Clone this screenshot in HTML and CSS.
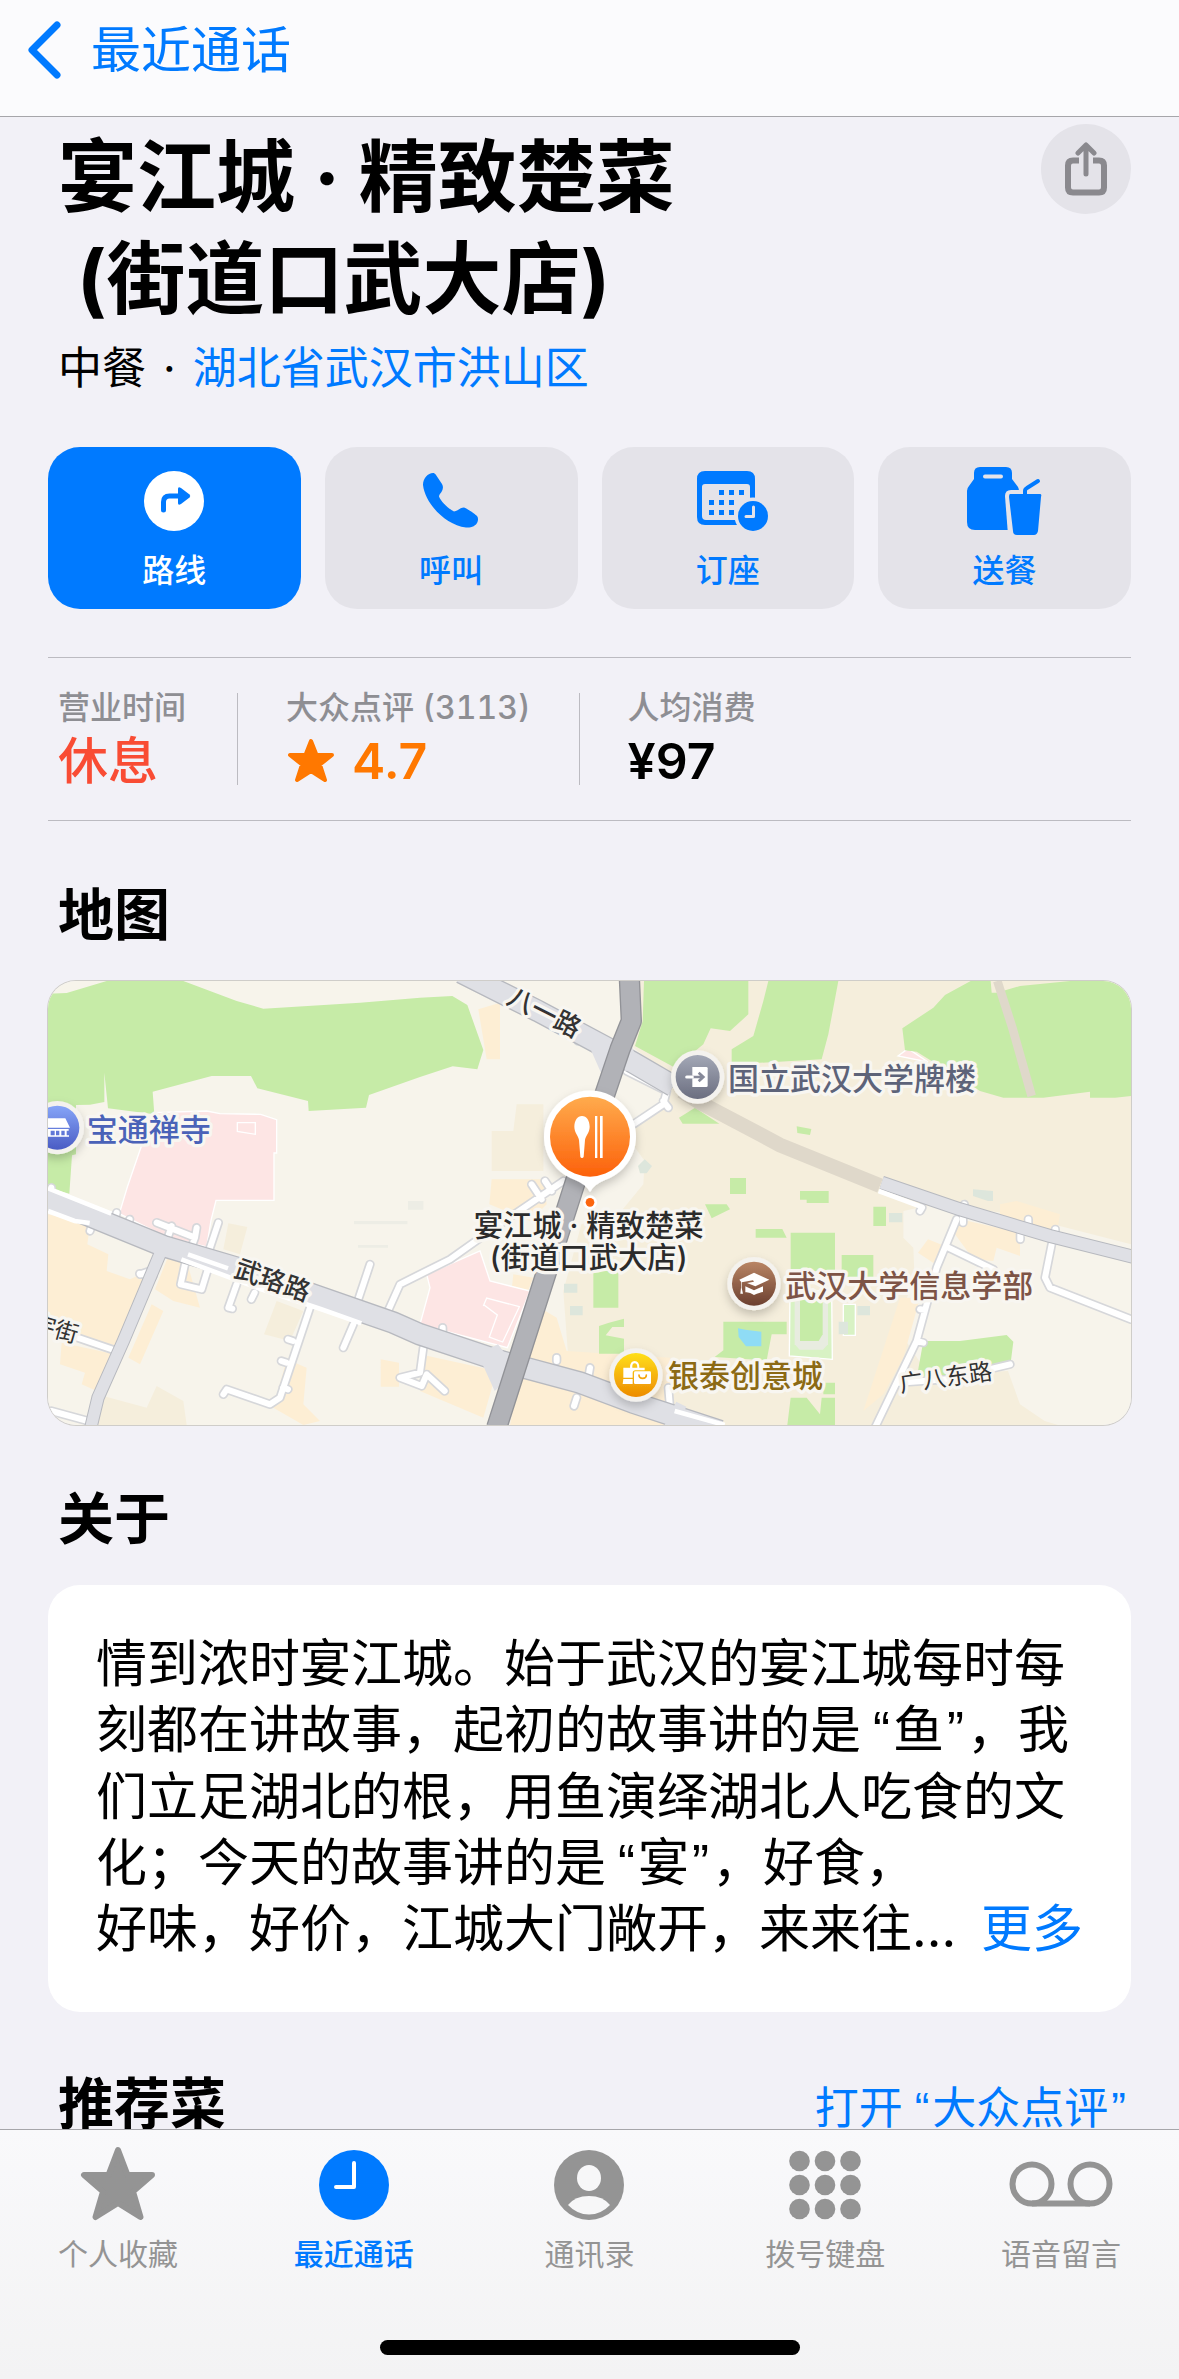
FILE: index.html
```
<!DOCTYPE html>
<html lang="zh-CN">
<head>
  <meta charset="UTF-8" />
  <meta name="viewport" content="width=device-width, initial-scale=1.0"/>
  <title>宴江城 · 精致楚菜</title>
  <link rel="stylesheet" href="styles.css">
</head>
<body>

  <header class="navbar">
    <a class="back" href="#recents">
      <svg width="34" height="58" viewBox="0 0 34 58"><path d="M30 4 5 29l25 25" fill="none" stroke="currentColor" stroke-width="7" stroke-linecap="round" stroke-linejoin="round"/></svg>
      最近通话
    </a>
  </header>

  <main class="content">
    <section class="place">
      <div>
        <h1>宴江城 · 精致楚菜<br>&nbsp;(街道口武大店)</h1>
        <p class="subtitle">中餐<span class="dot">·</span><a href="#area">湖北省武汉市洪山区</a></p>
      </div>
      <button class="share" type="button" aria-label="共享">
        <svg width="42" height="54" viewBox="0 0 42 54" fill="none" stroke="currentColor" stroke-linecap="round" stroke-linejoin="round">
          <path d="M14 18.500H8q-5 0-5 5v22q0 5 5 5h26q5 0 5-5v-22q0-5-5-5h-6" stroke-width="6" stroke-linecap="butt"/>
          <path d="M21 32V4M13 11l8-8 8 8" stroke-width="5"/>
        </svg>
      </button>
    </section>

    <div class="actions">
      <button class="action primary" type="button">
        <svg width="60" height="60" viewBox="0 0 60 60">
          <circle cx="30" cy="30" r="30" fill="#fff"/>
          <path d="M19.500 39V31q0-6 6-6H36" fill="none" stroke="#007aff" stroke-width="5" stroke-linecap="round"/>
          <path d="M34 18q0-3 3-1l8.500 6.500q1.500 1.500 0 3L37 33q-3 2-3-1z" fill="#007aff"/>
        </svg>
        路线
      </button>
      <button class="action" type="button">
        <svg width="56" height="56" viewBox="0 0 56 56">
          <path d="M10 0C11 0 12 .5 13 2L19 11C20.500 13.500 20 16 19 18 18 20 16 21.500 16 23.500 18 29 26 36 31 38.500 34 38.500 37 34.500 41 34.500 42.500 34.500 52 41 53.500 42.500 55 44 55.500 46 54.500 49 53 53 48 55 43 54.500 22 52 2 30 0 12 0 5 5 0 10 0z" fill="currentColor"/>
        </svg>
        呼叫
      </button>
      <button class="action" type="button">
        <svg width="82" height="60" viewBox="-10 0 82 60">
          <path fill="currentColor" fill-rule="evenodd" d="M8 0h42q8 0 8 8v38q0 8-8 8H8q-8 0-8-8V8q0-8 8-8zM8 13q-3 0-3 3v29q0 4 4 4h40q4 0 4-4V16q0-3-3-3z"/>
          <path fill="currentColor" d="M22 19h5v5h-5zM32 19h5v5h-5zM42 19h5v5h-5zM12 29h5v5h-5zM22 29h5v5h-5zM32 29h5v5h-5zM12 39h5v5h-5zM22 39h5v5h-5zM32 39h5v5h-5z"/>
          <circle cx="56" cy="45" r="18.500" fill="#e4e3e9"/>
          <circle cx="56" cy="45" r="15" fill="currentColor"/>
          <path d="M56.500 36v9.500H49" fill="none" stroke="#e4e3e9" stroke-width="3" stroke-linecap="round" stroke-linejoin="round"/>
        </svg>
        订座
      </button>
      <button class="action" type="button">
        <svg width="76" height="68" viewBox="0 0 76 68">
          <path fill="currentColor" d="M7 6q0-6 6-6h26q6 0 6 6v6l6 8q1 2 1 4v39H8q-8 0-8-8V24q0-3 2-5l5-7z"/>
          <path d="M18 9.500h16" stroke="#e4e3e9" stroke-width="4" stroke-linecap="round"/>
          <path fill="#e4e3e9" d="M44 23h30v45H41L38 29q0-6 6-6z"/>
          <path fill="currentColor" d="M43 27h30q2 0 1 3l-3 34q-1 4-4 4H50q-4 0-4-4l-4-34q0-3 1-3z"/>
          <path d="M58 28v-4q0-2 2-3l11-7" fill="none" stroke="currentColor" stroke-width="4" stroke-linecap="round"/>
        </svg>
        送餐
      </button>
    </div>

    <dl class="stats">
      <div class="stat">
        <dt>营业时间</dt>
        <dd class="closed">休息</dd>
      </div>
      <div class="stat">
        <dt>大众点评 (3113)</dt>
        <dd class="rating">
          <svg width="48" height="46" viewBox="0 0 48 46"><path d="M25 3l5.500 14H46L34 26.500 39 42 25 33 11 42l5-15.500L4 17h15.500z" fill="currentColor" stroke="currentColor" stroke-width="4" stroke-linejoin="round"/></svg>
          4.7
        </dd>
      </div>
      <div class="stat">
        <dt>人均消费</dt>
        <dd>¥97</dd>
      </div>
    </dl>

    <h2>地图</h2>
    <div class="map">
      <svg viewBox="0 0 3249 1332" role="img" aria-label="地图">
        <defs>
          <linearGradient id="food" x2="0" y2="1"><stop stop-color="#ffab4d"/><stop offset="1" stop-color="#fc610a"/></linearGradient>
          <linearGradient id="temple" x2="0" y2="1"><stop stop-color="#86a5f8"/><stop offset="1" stop-color="#4a5cc4"/></linearGradient>
          <linearGradient id="gate" x2="0" y2="1"><stop stop-color="#a3a8b6"/><stop offset="1" stop-color="#6b6e80"/></linearGradient>
          <linearGradient id="school" x2="0" y2="1"><stop stop-color="#b98565"/><stop offset="1" stop-color="#6c4030"/></linearGradient>
          <linearGradient id="shop" x2="0" y2="1"><stop stop-color="#ffdf1a"/><stop offset="1" stop-color="#ed8b00"/></linearGradient>
          <filter id="shadow" x="-30%" y="-30%" width="160%" height="180%"><feDropShadow dx="0" dy="14" stdDeviation="14" flood-opacity=".2"/></filter>
        </defs>

        <!-- land -->
        <rect width="3249" height="1332" fill="#f7f4eb"/>
        <path fill="#f5eedc" d="M1770 0H3249V790L2900 700 2660 670 2566 690 2566 770 2596 800 2600 900 2540 1030 2640 1180 2880 1170 2916 1270 2990 1320 3030 1332H1660L1560 1120 1546 930 1600 730 1720 690 1786 610 1790 540 1740 470 1756 440 1856 370 1876 290 1756 200zM541 727l57 11-22 82-50-15zM686 960l80 30-40 90-78-20zM166 1245l130 35 30-65 80 45 10 72H141zM1406 370h80v200h-155V450h65z"/>
        <path fill="#fdeed4" d="M0 700l126 30-8 60 63 30-5 50 70 25 55-25-93 230L0 1030zM361 825l55 15 40 140-80-20-55-35zM311 970l35 20-70 160-35-20zM41 1085l160 35-55 110-45-20 10-35-75-25zM716 1135l60 25-10 110 50 50-50 12-90-52zM998 1135l55 10v72h-55zM1331 595h155l10 75-50 50-122-50zM1291 85l65-20v170h-40zM1116 1120l230 50-40 140-190-80zM1476 980l50 30 30 100 310 20 10 202h-490l30-162 40-140zM1396 880l60 10-20 50-45-15zM2736 715l180 40 0 70-70-25-10 40-60-5-55-75zM2640 775l50 20-20 60-60-40zM2856 670l50-10 130 40-10 60-170-40zM2556 950h60l-50 180-60 110-60 50z"/>
        <!-- hospitals -->
        <path fill="#fde5e4" stroke="#fff" stroke-width="4" d="M316 395l160-5 40 8 122 2 48 16v100h-8v142H504l-15 60-13 80-120-30-142-70 24-80 36-105zM1136 880l160-70 30 90 120 30-68 170-262-70 30-110zM2550 225l30-22 60 40z"/>
        <path fill="none" stroke="#fff" stroke-width="4" d="M568 425h54v35l-54-9zM1306 975l10-24 98 26-50 106-40-15 24-66-40-30z"/>
        <!-- parks -->
        <path fill="#c6eba7" d="M0 38l56-2L176 0h230l160 60 80 23 290-18 180-15 97-5 45 27 48 135-18 58-74-9-98 32-153 54-9 38-172 10-2-30-152-38-19-37H491l-177 47 5 68-139-18-11-107v88l-43 8-42 1v148l-12 3-8 115-64-18z"/>
        <path fill="#c6eba7" d="M1788 0h313v100l-55 50-58-8-22 48-85 70-120-65 23-75zM2161 0h210l-30 160-20 75-270 15v-45l65-40 30-105zM2768 0h60l3 35h15l70-20 150-15h183v345l-48 5h-75v-18l-140 18h-120l-70-20-190-118-35-4-8-66 93-62 35-38z"/>
        <path fill="#c6eba7" d="M1893 410l48-30 73 48h-110zM2046 591h48v48h-48zM1971 670h65l10 15-55 27zM2123 744h80l13 26h-93zM2256 630h86v36h-66v-10h-20zM2476 677h38v58h-38zM2228 755h133v115h-133zM2381 822h95v70h-95zM2246 436l44 8-4 18-38-6zM1636 870h75v110h-75zM1653 1035l30-10 45-12v25h-35l-20 25 55 10v45h-75zM2026 1022h190v38h-45l-15 78-156-10 26-20zM2626 1080h110l140-18 20 20-10 80-280 30zM2326 1205h35v35h-35zM2228 1250h48l40 50 5-50h40v82h-143z"/>
        <path fill="#d8f2c4" stroke="#fff" stroke-width="4" d="M2226 930h125l2 205-129-10zM2386 970h36v93h-36z"/>
        <path fill="#e8ece0" d="M2240 950h100v140l-15 16h-70l-15-16z"/>
        <path fill="#c6eba7" d="M2256 940h68v120l-12 20h-56z"/>
        <path fill="#8fdcf5" d="M2070 1042l22 4 48 6v44h-46l-22-28z"/>
        <!-- buildings -->
        <path fill="#dde6dc" d="M1548 908h40v27h-40zM1566 975h38v28h-38zM1770 555l20-20 22 20-16 22h-20zM2775 625l60 5v30h-15l-45-15zM2523 696h40v28h-40zM2428 975h38v28h-38zM2372 1022h28v38h-28z"/>
        <path fill="#ededE5" d="M1080 660h46v26h-46zM918 720h160v10H918zM930 792h90v8h-90z"/>

        <!-- tunnels and paths -->
        <path fill="none" stroke="#dfd8ca" stroke-width="44" d="M1900 330l56 35 180 95 60 32 300 122"/>
        <path fill="none" stroke="#dfd8ca" stroke-width="26" d="M2848 0l45 140 58 205"/>

        <!-- lanes -->
        <g class="lane-edge">
          <path id="lanes" d="M0 1040l206 70M326 725l115 45 5-30M441 770l-15 40M361 765l10-30M511 725l-30 90M413 840l-15 70 63 15 20-65M566 910l-25 70 12 3M620 935l-10 20M786 980l-90 270-30 20-130-45-10 15M735 1080l-15-5M700 1140l15 5M705 1220l15 5M966 850l-40 120M916 1030l-30 70M1011 1010l45-100 150-75 120-85 220-150M1451 610l30 45M1491 600l20 30M1736 270l120 60-10 40-90 60M1846 360l15 20M1126 1100l-10 75-60 15 65 25 15-35 54 50M10 620l-10 30M206 695l-6 20M245 715l-6 20M132 730l-6 20M275 878l40 8M1345 40l12-20M1590 180l10-15M1626 1160l-5 30M1526 1140v-10M1586 1250l-8 25M1184 1040v20M1861 1220l5 60 120 50M2726 715l-60 145-60 220-125 260M2701 800l135 65M3011 790l-20 100 15 30 243 95M2551 1205l145-10 190-45M2606 1080l20 5M2616 985l15 2M2616 690l6-10M2749 670l-4 15v40M2941 715v20l-24 25v15M3022 745v10M10 1290l110 30M306 870l-30 10"/>
        </g>
        <use href="#lanes" class="lane"/>

        <!-- main roads -->
        <path class="road-edge" stroke-width="40" d="M346 795L226 1080 150 1250 126 1350"/>
        <path class="road-edge" stroke-width="68" d="M-10 650l356 145 220 65 240 85 230 80 80 35 240 80 240 65 160 60 260 85M1240-25l230 115 206 110 80 45 120 70"/>
        <path class="road-edge" stroke-width="42" d="M2501 605l235 80 270 80 260 65"/>
        <path class="road" stroke-width="34" d="M346 795L226 1080 150 1250 126 1350M1900 1270l-40 80"/>
        <path class="road" stroke-width="60" d="M-10 650l356 145 220 65 240 85 230 80 80 35 240 80 240 65 160 60 260 85M1240-25l230 115 206 110 80 45 120 70"/>
        <path class="road" stroke-width="36" d="M2501 605l235 80 270 80 260 65"/>
        <path fill="none" stroke="#fff" stroke-width="14" d="M0 622l190 76M0 690l80 30 45 6M400 835l240 90 180 60 120 42M420 820l120 42M2492 630l130 48M1880 1290l150 42"/>
        <path fill="#dfe0e5" d="M1640 160l60 20-30 120-40-90zM1740 160l20 60 60 40-90 10zM1290 1120l60-30 60 80-70 60z"/>
        <path fill="none" stroke="#919297" stroke-width="64" stroke-linejoin="round" d="M1744-10l6 130-34 85-130 385-240 750"/>
        <path fill="none" stroke="#b1b2b7" stroke-width="56" stroke-linejoin="round" d="M1744-10l6 130-34 85-130 385-240 750"/>

        <!-- road names -->
        <g class="road-name">
          <text class="major" transform="translate(1372 66) rotate(27)">八一路</text>
          <text class="major" transform="translate(554 886) rotate(19)">武珞路</text>
          <text transform="translate(-52 1048) rotate(16)">宇街</text>
          <text transform="translate(2558 1234) rotate(-8)">广八东路</text>
        </g>

        <!-- places -->
        <g class="pin" transform="translate(28 440)">
          <circle class="ring" r="80"/>
          <circle r="66" fill="url(#temple)"/>
          <path fill="#fff" d="M-34-28h58l14 28h-84zM-38 4h72v5h-6v14h7v4h-74v-4h7V9h-6zM-20 9v14h12V9zM-4 9v14h10V9zM12 9v14h10V9z" fill-rule="evenodd"/>
        </g>
        <text class="poi" x="116" y="480" fill="#4a62b8">宝通禅寺</text>

        <g class="pin" transform="translate(1949 288)">
          <circle class="ring" r="80"/>
          <circle r="66" fill="url(#gate)"/>
          <path fill="#fff" d="M-16-30h42q4 0 4 4v52q0 4-4 4h-42z"/>
          <path d="M-33 0h46M3-13l14 13-14 13" fill="none" stroke="#868999" stroke-width="8"/>
          <path d="M-33 0h17" stroke="#fff" stroke-width="9" stroke-linecap="round"/>
        </g>
        <text class="poi" x="2040" y="327" fill="#5d6379">国立武汉大学牌楼</text>

        <g class="pin" transform="translate(2118 908)">
          <circle class="ring" r="80"/>
          <circle r="66" fill="url(#school)"/>
          <path fill="#fff" d="M-44-12L0-33l46 21L4 8l-25-10 21-4-3-4-34 6v16l4 18h-8l2-18v-18zM-26 8L0 20 27 8v17Q18 26 0 34q-14-10-26-8z"/>
        </g>
        <text class="poi" x="2212" y="947" fill="#7d5446">武汉大学信息学部</text>

        <g class="pin" transform="translate(1764 1182)">
          <circle class="ring" r="80"/>
          <circle r="66" fill="url(#shop)"/>
          <path fill="#fff" d="M-38-22h20q0-20 14-20t14 20h16v8h-28q-8 0-8 8v14h-28zM-11-22h15q0-13-8-13t-7 13zM-38 12h28v15h-30z" fill-rule="evenodd"/>
          <rect x="-6" y="-11" width="51" height="38" rx="4" fill="#fff"/>
          <path d="M9 0q0 10 11 10T31 0" fill="none" stroke="#f5a60a" stroke-width="5" stroke-linecap="round"/>
        </g>
        <text class="poi" x="1860" y="1219" fill="#8c6a14">银泰创意城</text>

        <g class="pin">
          <path fill="#fff" d="M1626 633q-10-22-45-36A138 138 0 1 1 1671 597q-35 14-45 36z"/>
          <circle cx="1626" cy="467" r="120" fill="url(#food)"/>
          <path fill="#fff" d="M1602 405c14 0 23 14 23 32s-12 26-14 40l-4 50q-1 4-5 4t-5-4l-4-50c-2-14-14-22-14-40s9-32 23-32zM1641 405h7v126h-7zM1656 405h8v126h-8z"/>
        </g>
        <g class="here">
          <text x="1622" y="764">宴江城 · 精致楚菜</text>
          <text x="1622" y="860">(街道口武大店)</text>
        </g>
        <circle cx="1626" cy="664" r="21" fill="#fff"/>
        <circle cx="1626" cy="664" r="13" fill="#fc660f"/>
      </svg>
    </div>

    <h2>关于</h2>
    <div class="about">
      <p>情到浓时宴江城。始于武汉的宴江城每时每<br>刻都在讲故事，起初的故事讲的是<q>鱼</q>，我<br>们立足湖北的根，用鱼演绎湖北人吃食的文<br>化；今天的故事讲的是<q>宴</q>，好食，</p>
      <div class="last-line"><span>好味，好价，江城大门敞开，来来往...</span><a href="#more">更多</a></div>
    </div>

    <div class="section-head">
      <h2>推荐菜</h2>
      <a href="#dianping">打开<q>大众点评</q></a>
    </div>
  </main>

  <nav class="tabbar">
    <div class="tabs">
      <a class="tab" href="#favorites">
        <svg width="76" height="76" viewBox="0 0 76 76"><path d="M38 4l9.500 25H72L53 45.500 60.500 71 38 57 15.500 71 23 45.500 4 29h24.500z" fill="currentColor" stroke="currentColor" stroke-width="6" stroke-linejoin="round"/></svg>
        个人收藏
      </a>
      <a class="tab active" href="#recents">
        <svg width="70" height="76" viewBox="0 0 70 76"><circle cx="35" cy="39" r="35" fill="currentColor"/><path d="M35 17v24H17" fill="none" stroke="#fff" stroke-width="4" stroke-linecap="round" stroke-linejoin="round"/></svg>
        最近通话
      </a>
      <a class="tab" href="#contacts">
        <svg width="70" height="76" viewBox="0 0 70 76"><circle cx="35" cy="39" r="35" fill="currentColor"/><ellipse cx="35" cy="32" rx="12" ry="13" fill="#f7f7f8"/><path d="M14 59q7-9 21-9t21 9q-9 9.500-21 9.500T14 59z" fill="#f7f7f8"/></svg>
        通讯录
      </a>
      <a class="tab" href="#keypad">
        <svg width="72" height="76" viewBox="0 0 72 76" fill="currentColor">
          <circle cx="10.500" cy="15" r="10.300"/><circle cx="36" cy="15" r="10.300"/><circle cx="61.500" cy="15" r="10.300"/>
          <circle cx="10.500" cy="39" r="10.300"/><circle cx="36" cy="39" r="10.300"/><circle cx="61.500" cy="39" r="10.300"/>
          <circle cx="10.500" cy="63" r="10.300"/><circle cx="36" cy="63" r="10.300"/><circle cx="61.500" cy="63" r="10.300"/>
        </svg>
        拨号键盘
      </a>
      <a class="tab" href="#voicemail">
        <svg width="104" height="76" viewBox="0 0 104 76" fill="none" stroke="currentColor" stroke-width="6"><circle cx="23" cy="38" r="19.500"/><circle cx="81" cy="38" r="19.500"/><path d="M23 57.500h58"/></svg>
        语音留言
      </a>
    </div>
    <div class="home-bar"></div>
  </nav>

</body>
</html>
```
FILE: styles.css
```
* { margin: 0; padding: 0; box-sizing: border-box; }
body {
  display: flex;
  flex-direction: column;
  min-height: 100vh;
  background-color: #f2f1f7;
  color: #000;
  font-family: Inter, "Noto Sans CJK SC", sans-serif;
}
a { color: #007aff; text-decoration: none; }
button { border: none; font-family: inherit; cursor: pointer; }

/* curly quotes, narrow latin form */
q::before, q::after { font-family: "Liberation Sans", sans-serif; }
q::before { content: "“"; margin: 0 3px 0 12px; }
q::after { content: "”"; margin: 0 3px; }

.navbar {
  height: 117px;
  padding: 0 27px 16px;
  display: flex;
  align-items: center;
  background-color: #fbfbfd;
  border-bottom: 1px solid #a6a6aa;
}
.back { display: flex; align-items: center; gap: 30px; font-size: 50px; line-height: 60px; }

.content { padding: 0 48px; }
.place { display: flex; justify-content: space-between; align-items: flex-start; padding: 7px 0 0 10px; }
h1 { margin-top: 2px; font-size: 79px; line-height: 102px; font-weight: 700; }
.subtitle { margin-top: 8px; font-size: 44px; line-height: 60px; }
.dot { margin: 0 17px; }
.share {
  width: 90px;
  height: 90px;
  border-radius: 50%;
  background-color: #e4e3e9;
  color: #8a898e;
  display: flex;
  align-items: center;
  justify-content: center;
}

.actions { display: grid; grid-template-columns: repeat(4, 1fr); gap: 24px; margin-top: 49px; }
.action {
  height: 162px;
  padding: 20px 0 14px;
  border-radius: 32px;
  background-color: #e4e3e9;
  color: #007aff;
  display: flex;
  flex-direction: column;
  align-items: center;
  justify-content: space-between;
  font-size: 32px;
  line-height: 48px;
  font-weight: 500;
}
.action svg { height: 68px; overflow: visible; }
.action.primary { background-color: #007aff; color: #fff; }

.stats {
  display: flex;
  margin-top: 48px;
  padding: 35px 0;
  border-top: 1px solid #bcbbc1;
  border-bottom: 1px solid #bcbbc1;
}
.stat { height: 92px; padding: 0 48px; border-left: 1px solid #bcbbc1; }
.stat:first-child { padding: 0 51px 0 10px; border-left: none; }
dt { font-size: 32px; line-height: 30px; font-weight: 500; color: #8e8e93; font-variant-numeric: tabular-nums; }
dd { margin-top: 8px; font-size: 50px; line-height: 60px; font-weight: 600; }
.closed { color: #f94c34; font-weight: 500; }
.rating { display: flex; align-items: center; gap: 18px; color: #ff7800; }

h2 { font-size: 56px; line-height: 80px; font-weight: 700; padding-left: 10px; }
.content > h2 { margin: 54px 0 26px; }

.map {
  border-radius: 28px;
  overflow: hidden;
  box-shadow: 0 0 0 1px #cfcdc9;
}
.map svg { display: block; width: 100%; }
.lane-edge { fill: none; stroke: #d6d7da; stroke-width: 28; stroke-linecap: round; stroke-linejoin: round; }
.lane { fill: none; stroke: #fff; stroke-width: 18; stroke-linecap: round; stroke-linejoin: round; }
.road-edge { fill: none; stroke: #b7b9bf; }
.road { fill: none; stroke: #dfe0e5; stroke-linejoin: round; }
.pin { filter: url(#shadow); }
.ring { fill: #f4f2ee; }
.road-name, .poi, .here {
  stroke: #f8f6f1;
  stroke-width: 20px;
  stroke-linejoin: round;
  paint-order: stroke;
}
.road-name { fill: #333; font-size: 70px; }
.major { font-size: 78px; font-weight: 500; }
.poi { font-size: 93px; font-weight: 500; }
.here { fill: #2b2b2b; font-size: 88px; font-weight: 500; text-anchor: middle; }

.about {
  padding: 46px 48px 50px;
  border-radius: 32px;
  background-color: #fff;
  font-size: 51px;
  line-height: 66px;
  white-space: nowrap;
}
.about p { margin-bottom: -1px; }
.last-line { display: flex; justify-content: space-between; }

.section-head { display: flex; justify-content: space-between; align-items: baseline; margin-top: 52px; height: 65px; }
.section-head a { font-size: 44px; line-height: 60px; padding-right: 2px; }

.tabbar {
  margin-top: auto;
  height: 250px;
  border-top: 1px solid #a6a6aa;
  background: linear-gradient(to bottom, #f9f9fb, #f3f3f4);
}
.tabs { display: grid; grid-template-columns: repeat(5, 1fr); padding-top: 16px; }
.tab {
  display: flex;
  flex-direction: column;
  align-items: center;
  gap: 10px;
  color: #949494;
  font-size: 30px;
  line-height: 44px;
}
.tab.active { color: #007aff; font-weight: 500; }
.home-bar { width: 420px; height: 15px; margin: 64px auto 0; border-radius: 8px; background-color: #000; }
```
